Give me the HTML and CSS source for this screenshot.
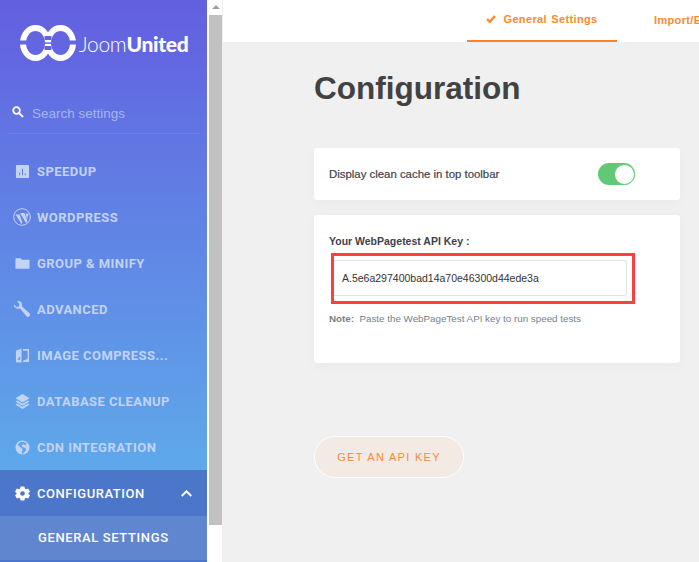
FILE: index.html
```html
<!DOCTYPE html>
<html lang="en">
<head>
<meta charset="utf-8">
<title>Configuration</title>
<link rel="stylesheet" href="styles.css">
</head>
<body>
<aside class="sidebar">
  <div class="logo">
    <svg class="logo-mark" width="56" height="36" viewBox="0 0 56 36" fill="none">
      <mask id="logo-gaps" maskUnits="userSpaceOnUse" x="0" y="0" width="56" height="36">
        <rect width="56" height="36" fill="#fff"/>
        <rect x="0" y="15.500" width="8" height="4" fill="#000"/>
        <rect x="48" y="15.500" width="8" height="4" fill="#000"/>
        <rect x="24.500" y="11" width="7" height="4" fill="#000"/>
        <rect x="24.500" y="17.300" width="7" height="1.500" fill="#000"/>
        <rect x="24.500" y="21" width="7" height="4" fill="#000"/>
      </mask>
      <g mask="url(#logo-gaps)" stroke="#fff" stroke-width="6">
        <ellipse cx="15.500" cy="18" rx="12.500" ry="15"/>
        <ellipse cx="40.500" cy="18" rx="12.500" ry="15"/>
        <path d="M28 15V21" stroke-width="5"/>
      </g>
    </svg>
    <span class="logo-text"><span class="logo-light">Joom</span><b>United</b></span>
  </div>
  <div class="search">
    <svg class="search-icon" width="12" height="12" viewBox="0 0 12 12" fill="none" stroke="#fff" stroke-width="1.800"><circle cx="4.500" cy="4.500" r="3.300"/><path d="M7 7l4 4"/></svg>
    <span class="search-text">Search settings</span>
  </div>
  <nav class="nav">
    <a class="item"><svg class="ic" viewBox="0 0 16 16"><path fill-rule="evenodd" d="M2 1h12a1 1 0 0 1 1 1v12a1 1 0 0 1-1 1H2a1 1 0 0 1-1-1V2a1 1 0 0 1 1-1zm2.500 8v3h1V9zm3-4v7h1V5zm3 5v2h1v-2z"/></svg>SPEEDUP</a>
    <a class="item"><svg class="ic ic-wp" viewBox="0 0 18 18"><circle cx="9" cy="9" r="8.300" fill="none" stroke="currentColor" stroke-width="1"/><path d="M2.500 6.500h4l3 8-1 1.500zM7 5h4.500l3 8.500-1.500 1.500zM12.500 5.500h3.200L14 11z"/></svg>WORDPRESS</a>
    <a class="item"><svg class="ic" viewBox="0 0 16 16"><path d="M1 2.500h5l1.500 1.500H15.500v9.500H.500V3z"/></svg>GROUP &amp; MINIFY</a>
    <a class="item"><svg class="ic ic-wp" viewBox="0 0 18 18"><path d="M1 4.500 3.800 7 6 6.500 6.500 4 4 1.500C6 .5 8.500 1.500 9 4c.2 1 0 1.500-.2 2.200l7.700 7c1 1 .8 2-.2 3s-2 .9-2.800 0L7 8.500C4 9.500.5 7.500 1 4.500z"/></svg>ADVANCED</a>
    <a class="item"><svg class="ic" viewBox="0 0 16 16"><path fill-rule="evenodd" d="M1 3l6-2.500V15.500H2a1 1 0 0 1-1-1zm1.500 9.500 3-4V12.500zM8.500 1H14a1 1 0 0 1 1 1v12a1 1 0 0 1-1 1H8.500v-1.500l4-1.500 1-1V3h-5z"/></svg>IMAGE COMPRESS...</a>
    <a class="item"><svg class="ic" viewBox="0 0 16 16"><path d="M8 0 15.500 4.500 8 9 .5 4.500zM2.300 6.800 8 10.300l5.700-3.500 1.800 1.100L8 12.500.5 7.900zM2.300 10 8 13.500l5.700-3.500 1.800 1.100L8 16 .5 11.100z"/></svg>DATABASE CLEANUP</a>
    <a class="item"><svg class="ic" viewBox="0 0 16 16"><path fill-rule="evenodd" d="M8 .5a7.500 7.500 0 1 1 0 15 7.500 7.500 0 0 1 0-15zM3 4.500l1 2 2.500 1.500L8 10l-1 4 2 .5 3-4-1-2-3-1-1-2 2-1 2 1 1.500-2L9.500 2H6z"/></svg>CDN INTEGRATION</a>
    <a class="item item-active"><svg class="ic" viewBox="0 0 16 16"><path fill-rule="evenodd" d="M6 .5h4l.5 2.200 1.200.7L14 2.700l2 3.400-1.700 1.300v1.200L16 9.900l-2 3.400-2.300-.7-1.200.7L10 15.500H6l-.5-2.200-1.200-.7-2.300.7-2-3.400 1.700-1.300V7.400L0 6.100l2-3.400 2.300.7 1.200-.7zM8 5.500a2.500 2.500 0 1 0 0 5 2.500 2.500 0 0 0 0-5z"/></svg>CONFIGURATION<svg class="chev" width="11" height="7" viewBox="0 0 11 7" fill="none" stroke="#fff" stroke-width="2"><path d="M.700 6 5.500 1.400 10.300 6"/></svg></a>
    <a class="sub">GENERAL SETTINGS</a>
  </nav>
</aside>
<div class="scrollbar">
  <div class="scroll-btn"><span class="scroll-arrow"></span></div>
  <div class="scroll-thumb"></div>
</div>
<div class="gutter"></div>
<main class="main">
  <header class="tabs">
    <a class="tab tab-on"><svg width="10" height="8" viewBox="0 0 10 8" fill="none" stroke="#fd8a2e" stroke-width="2.400"><path d="M1 4l2.800 2.800L9 1"/></svg>General Settings</a>
    <a class="tab tab-next">Import/Export</a>
  </header>
  <div class="content">
    <h1 class="title">Configuration</h1>
    <section class="card card-toggle">
      <span class="toggle-label">Display clean cache in top toolbar</span>
      <span class="switch"><span class="knob"></span></span>
    </section>
    <section class="card card-key">
      <label class="key-label">Your WebPagetest API Key :</label>
      <div class="highlight"><div class="input">A.5e6a297400bad14a70e46300d44ede3a</div></div>
      <p class="note"><b>Note:</b>&nbsp; Paste the WebPageTest API key to run speed tests</p>
    </section>
    <a class="api-btn">GET AN API KEY</a>
  </div>
</main>
</body>
</html>
```

FILE: styles.css
```css
* { box-sizing: border-box; }
html, body { margin: 0; height: 100%; overflow: hidden; }
body {
  display: flex;
  width: 699px;
  height: 562px;
  background: #f0f0f0;
  font-family: "Liberation Sans", Arial, sans-serif;
}
.sidebar {
  flex: 0 0 207px;
  height: 562px;
  overflow: hidden;
  background: linear-gradient(180deg, #6360e0 0, #5ea9ea 470px);
  color: #c3d3f6;
}
.logo {
  height: 91px;
  display: flex;
  align-items: center;
  padding: 0 0 5px 20px;
  background: rgba(95, 70, 220, .04);
}
.logo-mark { flex: none; margin-right: 3px; }
.logo-text { font-family: Lato, sans-serif; font-size: 21px; color: #fff; letter-spacing: -.3px; margin-top: 1px; }
.logo-light { font-weight: 300; }
.logo-text b { font-weight: 900; }
.search {
  height: 43px;
  margin: 0 7px;
  padding-left: 5px;
  display: flex;
  align-items: center;
  gap: 8px;
  border-bottom: 1px solid #5d84e9;
  font-size: 13.500px;
  color: #a3b7f2;
}
.search-text { margin-top: 3px; }
.nav { padding-top: 14px; }
.item {
  height: 46px;
  display: flex;
  align-items: center;
  padding-left: 15px;
  font-family: Roboto, sans-serif;
  font-size: 13px;
  font-weight: 700;
  letter-spacing: .45px;
  white-space: nowrap;
}
.ic { width: 15px; height: 15px; margin-right: 7px; fill: currentColor; flex: none; }
.ic-wp { width: 18px; height: 18px; margin-left: -2px; margin-right: 6px; }
.item-active { background: #4c76c9; color: #fff; font-weight: 500; letter-spacing: .55px; }
.chev { margin-left: auto; margin-right: 15px; }
.sub {
  display: flex;
  align-items: center;
  height: 46px;
  padding: 0 0 2px 38px;
  background: #5f86cf;
  border-bottom: 2px solid #4c76c9;
  color: #fff;
  font-family: Roboto, sans-serif;
  font-size: 13px;
  font-weight: 500;
  letter-spacing: .62px;
}
.scrollbar {
  flex: 0 0 15px;
  padding-left: 2px;
  background: #fff;
  position: relative;
}
.scroll-btn { height: 15px; display: flex; justify-content: center; padding-top: 5px; }
.scroll-arrow {
  width: 0; height: 0;
  border: 4px solid transparent;
  border-top: 0;
  border-bottom: 4px solid #a99aa7;
}
.scroll-thumb { height: 510px; background: #c1c1c1; }
.gutter { flex: 0 0 1px; background: #eef0f2; }
.main { flex: 1; min-width: 0; overflow: hidden; }
.tabs {
  height: 42px;
  background: #fff;
  display: flex;
  padding-left: 244px;
  white-space: nowrap;
}
.tab {
  flex: none;
  display: flex;
  align-items: center;
  justify-content: center;
  gap: 7px;
  height: 42px;
  padding-bottom: 2px;
  font-size: 11px;
  font-weight: 700;
  letter-spacing: .35px;
  word-spacing: 1px;
  color: #fd8a2e;
}
.tab-on { width: 150px; border-bottom: 2px solid #fd8225; }
.tab-next { margin-left: 37px; }
.content { padding: 0 0 0 91px; }
.title {
  margin: 28px 0 0;
  font-size: 31.500px;
  line-height: 37px;
  font-weight: 700;
  color: #424242;
}
.card {
  width: 366px;
  background: #fff;
  border-radius: 3px;
  box-shadow: 0 3px 12px rgba(0, 0, 0, .03);
}
.card-toggle {
  margin-top: 41px;
  height: 52px;
  display: flex;
  align-items: center;
  justify-content: space-between;
  padding: 0 45px 0 15px;
}
.toggle-label { font-size: 11.400px; font-weight: 400; color: #3f3f4a; -webkit-text-stroke: .2px #3f3f4a; }
.switch {
  width: 37px;
  height: 22px;
  border-radius: 11px;
  background: #61c975;
  display: flex;
  justify-content: flex-end;
}
.knob {
  width: 21px;
  height: 21px;
  margin-top: .5px;
  border-radius: 50%;
  background: #fff;
  border: 1px solid #61c975;
}
.card-key {
  margin-top: 15px;
  height: 148px;
  padding: 20px 15px 0;
}
.key-label { display: block; font-size: 10.500px; line-height: 13px; font-weight: 700; color: #3f3f4a; }
.highlight {
  width: 304px;
  height: 51px;
  margin: 5px 0 0 2px;
  border: 3px solid #f94141;
  padding-top: 4px;
}
.input {
  width: 293px;
  height: 36px;
  padding-left: 8px;
  background: #fff;
  border: 1px solid #e2e2e2;
  border-left: 0;
  border-radius: 0 3px 3px 0;
  display: flex;
  align-items: center;
  font-size: 10.500px;
  color: #333;
}
.note { margin: 9px 0 0; font-size: 9.800px; line-height: 12px; color: #76818f; }
.note b { font-weight: 700; }
.api-btn {
  display: flex;
  align-items: center;
  justify-content: center;
  width: 150px;
  height: 42px;
  margin-top: 73px;
  border: 1px solid #fff;
  border-radius: 21px;
  background: #f3eae4;
  color: #fd8a2e;
  font-size: 11px;
  letter-spacing: 1.300px;
}
```
